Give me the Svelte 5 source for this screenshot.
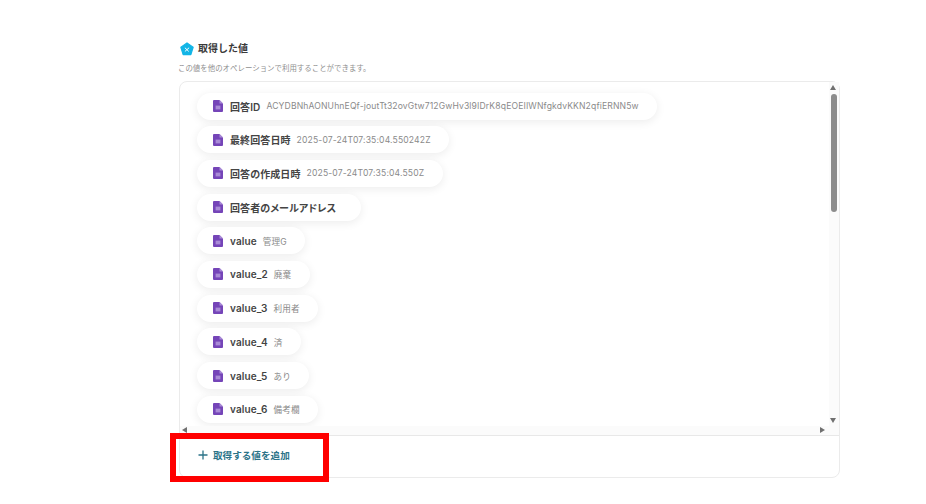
<script>
  const rows = [
    ['回答ID', 'ACYDBNhAONUhnEQf-joutTt32ovGtw712GwHv3l9IDrK8qEOEIIWNfgkdvKKN2qfiERNN5w'],
    ['最終回答日時', '2025-07-24T07:35:04.550242Z'],
    ['回答の作成日時', '2025-07-24T07:35:04.550Z'],
    ['回答者のメールアドレス', ''],
    ['value', '管理G'],
    ['value_2', '廃棄'],
    ['value_3', '利用者'],
    ['value_4', '済'],
    ['value_5', 'あり'],
    ['value_6', '備考欄']
  ];
</script>

<div class="page">
  <section class="panel">
    <h2 class="title">
      <svg class="logo" viewBox="0 0 16 16" aria-hidden="true">
        <path d="M8 1 15 6 12.4 14.4H3.6L1 6Z" fill="#12b5e6" stroke="#12b5e6" stroke-width="1.4" stroke-linejoin="round"/>
        <path d="M5.6 6.6 10 10.8M10.4 6.6 5.6 10.8" stroke="#fff" stroke-width="1.1" fill="none"/>
      </svg>
      取得した値
    </h2>
    <p class="sub">この値を他のオペレーションで利用することができます。</p>
    <div class="box">
      <div class="scroll">
        <ul class="list">
          {#each rows as [k, v]}
            <li class="pill">
              <svg class="doc" width="10" height="12" viewBox="0 0 10 12" aria-hidden="true">
                <path d="M1 0H6.5L10 3.5V11a1 1 0 0 1-1 1H1a1 1 0 0 1-1-1V1a1 1 0 0 1 1-1Z" fill="#7545b8"/>
                <path d="M6.5 0 10 3.5H6.5Z" fill="#a98bd6"/>
                <rect x="2.6" y="5.6" width="4.8" height="3.8" fill="#a98bd6"/>
              </svg>
              <span class="key">{k}</span>
              <span class="val">{v}</span>
            </li>
          {/each}
        </ul>
        <div class="vbar">
          <i class="up"></i>
          <b class="thumb"></b>
          <i class="down"></i>
        </div>
        <div class="hbar">
          <i class="left"></i>
          <i class="right"></i>
        </div>
      </div>
      <div class="foot">
        <button class="add">
          <svg class="plus" width="10" height="10" viewBox="0 0 10 10" aria-hidden="true">
            <path d="M5 .5V9.5M.5 5H9.5" stroke="#2b7388" stroke-width="1.3" fill="none"/>
          </svg>
          取得する値を追加
        </button>
      </div>
    </div>
    <div class="mark"></div>
  </section>
</div>

<style>
  :global(body) { margin: 0; background: #fff; }
  .page {
    width: 926px; height: 504px; overflow: hidden; box-sizing: border-box;
    padding: 41px 0 0 179px;
    font-family: Inter, "Noto Sans CJK JP", sans-serif;
    color: #333;
  }
  .panel { position: relative; width: 661px; }
  .title {
    display: flex; align-items: center; gap: 4px; margin: 0 0 0 1px;
    height: 15px; font-size: 10px; line-height: 15px; font-weight: 700; color: #3a3a3a;
  }
  .logo { width: 14px; height: 14px; }
  .sub { margin: 6px 0 0 -1px; height: 13px; font-size: 7.45px; line-height: 13px; color: #8f8f8f; }
  .box {
    margin-top: 6px; height: 397px; box-sizing: border-box;
    border: 1px solid #ebebeb; border-radius: 8px; background: #fff;
    display: flex; flex-direction: column;
  }
  .scroll { position: relative; height: 353px; overflow: hidden; border-bottom: 1px solid #e8e8e8; }
  .list {
    list-style: none; margin: 0; padding: 10.5px 0 0 17px;
    display: flex; flex-direction: column; align-items: flex-start; gap: 6.7px;
  }
  .pill {
    display: flex; align-items: center; height: 27px; padding: 0 18.5px 0 16px;
    border-radius: 14px; background: #fff;
    box-shadow: 0 2px 10px rgba(0,0,0,.08);
    white-space: nowrap;
  }
  .doc { flex: none; margin-right: 7px; }
  .key { font-size: 10px; font-weight: 600; color: #444; letter-spacing: .1px; font-feature-settings: "palt"; }
  .val { margin-left: 6px; font-size: 8.6px; color: #8a8a8a; letter-spacing: .14px; }
  .vbar { position: absolute; top: 0; right: 0; width: 10px; height: 100%; background: #fbfbfb; }
  .thumb {
    position: absolute; left: 1.5px; top: 12px; width: 6px; height: 118px;
    background: #8c8c8c; border-radius: 3px;
  }
  .up, .down, .left, .right { position: absolute; width: 0; height: 0; border: 3.5px solid transparent; }
  .up { top: 0; left: 1px; border-bottom: 5px solid #707070; border-top-width: 0; margin-top: 3px; }
  .down { bottom: 12px; left: 1px; border-top: 5px solid #707070; border-bottom-width: 0; }
  .hbar { position: absolute; left: 0; right: 10px; bottom: 0; height: 9px; background: #fbfbfb; }
  .left { left: 2px; top: 1px; border-right: 5px solid #707070; border-left-width: 0; }
  .right { right: 4px; top: 1px; border-left: 5px solid #707070; border-right-width: 0; }
  .foot { flex: 1; display: flex; align-items: center; padding: 0 0 3px 18px; }
  .add {
    display: flex; align-items: center; gap: 5px; padding: 0; border: 0; background: none;
    font: 600 9.6px Inter, "Noto Sans CJK JP", sans-serif; color: #2b7388;
  }
  .mark {
    position: absolute; left: -9px; top: 392px; width: 147px; height: 37px;
    border: 6px solid #f00; pointer-events: none;
  }
</style>
